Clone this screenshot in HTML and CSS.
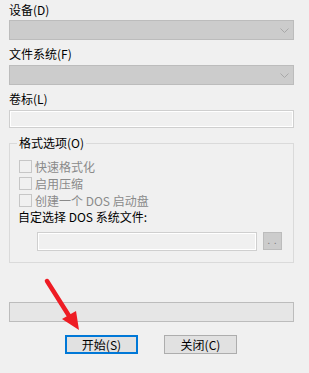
FILE: index.html
```html
<!DOCTYPE html>
<html lang="zh-CN">
<head>
    <meta charset="UTF-8">
    <title>格式化</title>
    <link rel="stylesheet" href="styles.css">
</head>
<body>
    <div class="dialog">
        <div class="label first">设备(D)</div>
        <div class="combo"><svg class="chevron" width="9" height="5" viewBox="0 0 9 5"><path d="M0.5 0.5 L4.5 4.5 L8.5 0.5" fill="none" stroke="#a8a8a8"/></svg></div>

        <div class="label">文件系统(F)</div>
        <div class="combo"><svg class="chevron" width="9" height="5" viewBox="0 0 9 5"><path d="M0.5 0.5 L4.5 4.5 L8.5 0.5" fill="none" stroke="#a8a8a8"/></svg></div>

        <div class="label">卷标(L)</div>
        <div class="textbox"></div>

        <fieldset class="group">
            <legend>格式选项(O)</legend>
            <div class="check"><span class="box"></span>快速格式化</div>
            <div class="check"><span class="box"></span>启用压缩</div>
            <div class="check"><span class="box"></span>创建一个 DOS 启动盘</div>
            <div class="custom">自定选择 DOS 系统文件:</div>
            <div class="file-row">
                <div class="textbox small"></div>
                <div class="browse">. .</div>
            </div>
        </fieldset>

        <div class="progress"></div>

        <div class="buttons">
            <div class="btn default">开始(S)</div>
            <div class="btn">关闭(C)</div>
        </div>
    </div>

    <svg class="arrow" width="60" height="70" viewBox="0 0 60 70">
        <line x1="7" y1="7" x2="31" y2="45" stroke="#ee1c24" stroke-width="4.5" stroke-linecap="round"/>
        <polygon points="22,45 36,37 39,56" fill="#ee1c24"/>
    </svg>
</body>
</html>
```

FILE: styles.css
```css
body {
    margin: 0;
    background: #f0f0f0;
    font-family: "Noto Sans CJK SC", "DejaVu Sans", sans-serif;
    font-size: 12px;
    color: #000;
    position: relative;
    width: 309px;
    height: 373px;
    overflow: hidden;
}
.dialog {
    padding: 2px 15px 0 9px;
}
.label {
    height: 16px;
    line-height: 16px;
    margin-top: 6px;
    margin-bottom: 3px;
}
.label.first {
    margin-top: 0;
    margin-bottom: 2px;
}
.combo {
    height: 18px;
    background: #cccccc;
    border: 1px solid #bcbcbc;
    display: flex;
    align-items: center;
    justify-content: flex-end;
    padding-right: 4px;
}
.chevron {
    margin-top: 1px;
}
.textbox {
    height: 16px;
    border: 1px solid #cfcfcf;
    box-shadow: inset 0 0 0 1px #ffffff;
    background: #f0f0f0;
}
.group {
    margin: 7px 0 0 0;
    padding: 0 7px 11px 8px;
    border: 1px solid #dadada;
}
.group legend {
    padding: 0 2px;
    margin-left: -1px;
    line-height: 16px;
}
.check {
    display: flex;
    align-items: center;
    height: 17px;
    color: #8a8a8a;
    margin-left: 1px;
}
.check:first-of-type {
    margin-top: 7px;
}
.box {
    width: 11px;
    height: 11px;
    border: 1px solid #c6c6c6;
    background: #f0f0f0;
    margin-right: 3px;
}
.custom {
    line-height: 16px;
    height: 15px;
}
.file-row {
    display: flex;
    align-items: flex-start;
    margin-top: 8px;
    padding-left: 19px;
    gap: 6px;
}
.textbox.small {
    width: 218px;
    height: 17px;
}
.browse {
    width: 17px;
    height: 16px;
    border: 1px solid #bcbcbc;
    background: #cccccc;
    color: #808080;
    font-size: 9px;
    line-height: 16px;
    text-align: center;
    letter-spacing: 1px;
}
.progress {
    margin-top: 39px;
    height: 18px;
    border: 1px solid #bcbcbc;
    background: #e6e6e6;
}
.buttons {
    display: flex;
    margin-top: 13px;
    padding-left: 56px;
    gap: 26px;
}
.btn {
    width: 71px;
    height: 17px;
    border: 1px solid #adadad;
    background: #e1e1e1;
    text-align: center;
    line-height: 17px;
}
.btn.default {
    width: 69px;
    height: 15px;
    line-height: 15px;
    border: 2px solid #0078d7;
}
.arrow {
    position: absolute;
    left: 40px;
    top: 274px;
}
```
